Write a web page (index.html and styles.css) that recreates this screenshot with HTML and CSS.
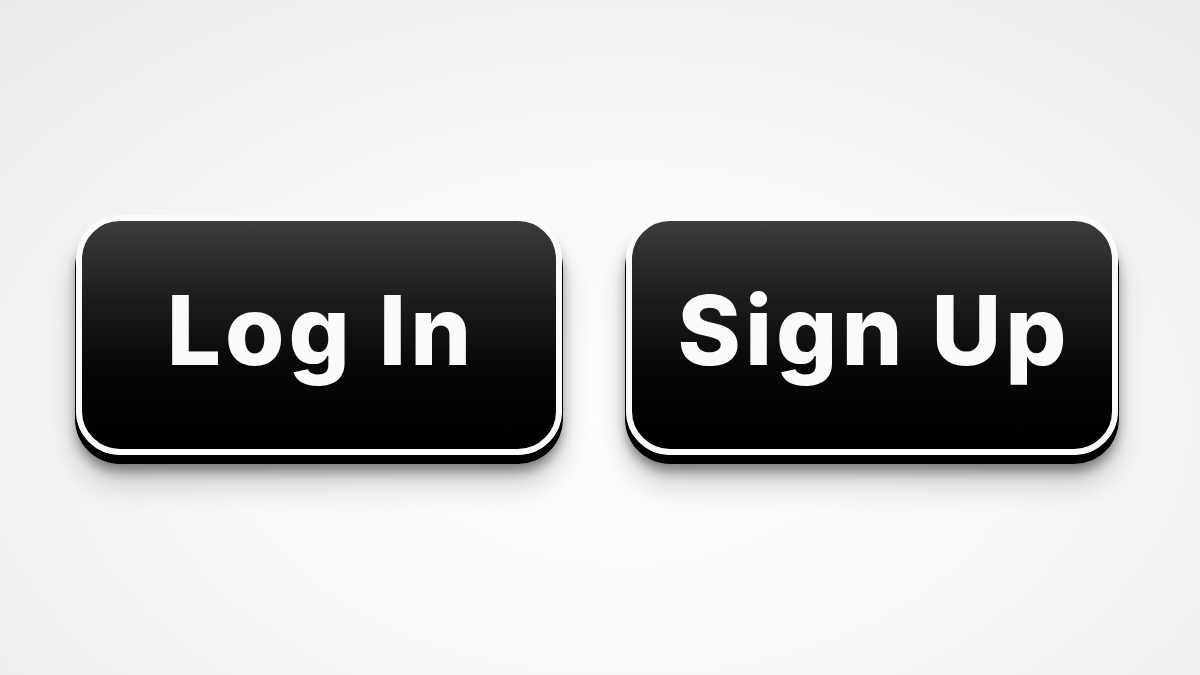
FILE: index.html
```html
<!DOCTYPE html>
<html lang="en">
<head>
    <meta charset="UTF-8">
    <meta name="viewport" content="width=device-width, initial-scale=1.0">
    <title>Log In / Sign Up</title>
    <link rel="stylesheet" href="styles.css">
</head>
<body>
    <div class="auth-actions">
        <button type="button" class="auth-btn auth-btn-login">Log In</button>
        <button type="button" class="auth-btn auth-btn-signup">Sign Up</button>
    </div>
</body>
</html>
```

FILE: styles.css
```css
* {
    margin: 0;
    padding: 0;
    box-sizing: border-box;
}

body {
    height: 100vh;
    background: radial-gradient(ellipse 75% 85% at 52% 62%, #fdfdfd 0%, #f8f8f8 45%, #ebebeb 100%);
    display: flex;
    justify-content: center;
    align-items: center;
    padding: 0 6px 5px 0;
    font-family: Inter, 'Noto Sans', sans-serif;
}

.auth-actions {
    display: flex;
    gap: 64px;
}

.auth-btn {
    height: 240px;
    border: 6px solid #fafafa;
    border-radius: 44px;
    background: linear-gradient(180deg, #3c3c3c 0%, #1c1c1c 35%, #060606 65%, #000 100%);
    color: #fafafa;
    font-family: inherit;
    font-size: 96px;
    font-weight: 800;
    letter-spacing: 4px;
    text-indent: 4px;
    display: flex;
    justify-content: center;
    align-items: center;
    padding-bottom: 10px;
    cursor: pointer;
    box-shadow:
        0 8px 0 1px #000,
        0 16px 12px 0 rgba(0, 0, 0, 0.4),
        0 28px 30px 0 rgba(0, 0, 0, 0.2);
}

.auth-btn-login {
    width: 486px;
}

.auth-btn-signup {
    width: 492px;
}
```
